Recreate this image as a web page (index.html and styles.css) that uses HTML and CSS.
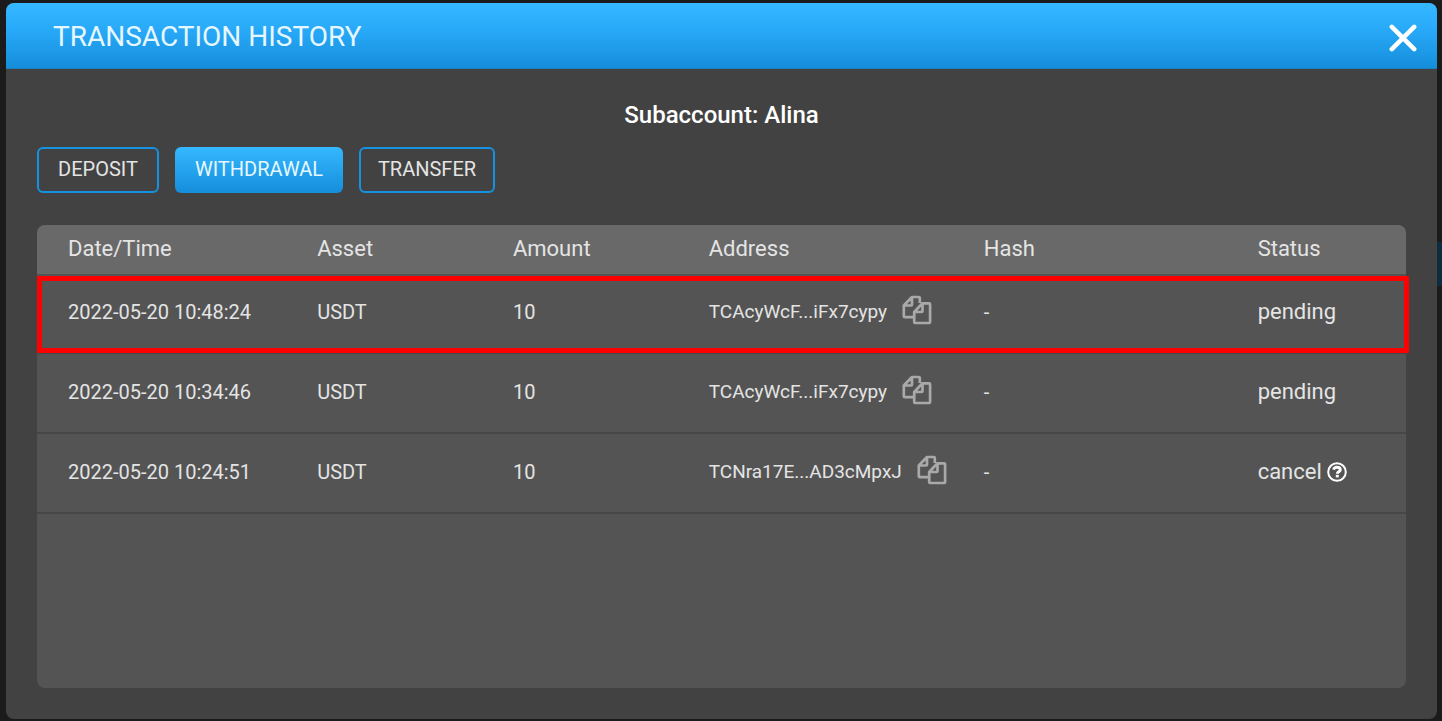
FILE: index.html
```html
<!DOCTYPE html>
<html lang="en">
<head>
<meta charset="utf-8">
<meta name="viewport" content="width=device-width, initial-scale=1">
<title>Transaction History</title>
<link rel="stylesheet" href="styles.css">
</head>
<body>
<svg class="sprite" aria-hidden="true">
  <symbol id="icon-copy" viewBox="0 0 30 30">
    <path d="M11.5 22.2H2.8Q1.8 22.2 1.8 21.2V10.5L10 2h6.8q1 0 1 1v5M2 10.5h7q1 0 1-1V2M12.2 17v10q0 1 1 1h13.9q1 0 1-1V9.3q0-1-1-1h-6.6L12.2 17h7.3q1 0 1-1V8.3" fill="none" stroke="currentColor" stroke-width="2.7" stroke-linejoin="round"/>
  </symbol>
</svg>
<div class="backdrop-tab"></div>
<main class="modal" role="dialog" aria-labelledby="modal-title">
  <header class="modal-header">
    <h1 class="modal-title" id="modal-title">TRANSACTION HISTORY</h1>
    <button class="close" type="button" aria-label="Close">
      <svg class="close-icon" viewBox="0 0 26 26"><path d="M2.6 2.6L23.4 23.4M23.4 2.6L2.6 23.4" stroke="currentColor" stroke-width="4.2" stroke-linecap="round"/></svg>
    </button>
  </header>
  <div class="modal-body">
    <h2 class="subaccount">Subaccount: Alina</h2>
    <nav class="tabs">
      <button class="tab tab-deposit" type="button">DEPOSIT</button>
      <button class="tab tab-withdrawal active" type="button">WITHDRAWAL</button>
      <button class="tab tab-transfer" type="button">TRANSFER</button>
    </nav>
    <section class="panel">
      <table class="history">
        <thead>
          <tr><th class="col-date">Date/Time</th><th class="col-asset">Asset</th><th class="col-amount">Amount</th><th class="col-address">Address</th><th class="col-hash">Hash</th><th class="col-status">Status</th></tr>
        </thead>
        <tbody>
          <tr class="highlight">
            <td>2022-05-20 10:48:24</td><td>USDT</td><td>10</td>
            <td><div class="address"><span>TCAcyWcF...iFx7cypy</span><button class="copy" type="button" aria-label="Copy address"><svg class="copy-icon"><use href="#icon-copy"/></svg></button></div></td>
            <td>-</td><td><div class="status">pending</div></td>
          </tr>
          <tr>
            <td>2022-05-20 10:34:46</td><td>USDT</td><td>10</td>
            <td><div class="address"><span>TCAcyWcF...iFx7cypy</span><button class="copy" type="button" aria-label="Copy address"><svg class="copy-icon"><use href="#icon-copy"/></svg></button></div></td>
            <td>-</td><td><div class="status">pending</div></td>
          </tr>
          <tr>
            <td>2022-05-20 10:24:51</td><td>USDT</td><td>10</td>
            <td><div class="address"><span>TCNra17E...AD3cMpxJ</span><button class="copy" type="button" aria-label="Copy address"><svg class="copy-icon"><use href="#icon-copy"/></svg></button></div></td>
            <td>-</td>
            <td><div class="status"><span>cancel</span><svg class="help-icon" viewBox="0 0 20 20" fill="none" stroke="currentColor"><circle cx="10" cy="10" r="8.8" stroke-width="2"/><path d="M6.6 7.6C7 5.8 8.4 5.2 10 5.2c2 0 3.3 1 3.3 2.5 0 2-3 2.1-3 4.1" stroke-width="2.9"/><path d="M8.8 14.1h3" stroke-width="2.6"/></svg></div></td>
          </tr>
        </tbody>
      </table>
    </section>
  </div>
</main>
</body>
</html>
```
FILE: styles.css
```css
* { box-sizing: border-box; }
body {
  margin: 0;
  min-height: 100vh;
  padding: 3px 5px 2px 6px;
  display: flex;
  background: #1b1b1b;
  color: #e4e4e4;
  font-family: Roboto, "Liberation Sans", sans-serif;
  font-size: 20px;
  line-height: 24px;
}
button { font: inherit; color: inherit; background: none; border: 0; padding: 0; cursor: pointer; }
.sprite { position: absolute; width: 0; height: 0; }
.backdrop-tab {
  position: absolute;
  right: 0;
  top: 242px;
  width: 10px;
  height: 44px;
  background: #0f2c3f;
}
.modal {
  position: relative;
  flex: 1;
  display: flex;
  flex-direction: column;
  background: #424242;
  border-radius: 8px;
  overflow: hidden;
}
.modal-header {
  height: 66px;
  padding: 2px 20px 0 47px;
  display: flex;
  align-items: center;
  justify-content: space-between;
  background: linear-gradient(#35b8ff, #2aacfb 35%, #158edb);
  border-bottom: 1px solid #1c7fbd;
}
.modal-title { margin: 0; color: #e6f7ff; font-size: 28px; line-height: 36px; font-weight: 400; }
.close { display: flex; padding: 2px 0 0; color: #fff; }
.close-icon { width: 28px; height: 28px; }
.modal-body { flex: 1; display: flex; flex-direction: column; padding: 32px 31px 31px; }
.subaccount { margin: 0; text-align: center; color: #fff; font-size: 24px; line-height: 28px; font-weight: 500; }
.tabs { display: flex; gap: 16px; margin: 18px 0 32px; }
.tab {
  height: 46px;
  padding-bottom: 2px;
  border: 2px solid #1593e2;
  border-radius: 6px;
}
.tab-deposit { width: 122px; }
.tab-withdrawal { width: 168px; }
.tab-transfer { width: 136px; }
.tab.active { background: linear-gradient(#35b8ff, #158edb) border-box; border-color: transparent; color: #e6f7ff; }
.panel { flex: 1; background: #545454; border-radius: 8px; }
.history { width: 100%; table-layout: fixed; border-collapse: separate; border-spacing: 0; }
.history th { height: 49px; padding: 0 0 2px 31px; text-align: left; font-size: 22px; font-weight: 400; background: #696969; }
.history th:first-child { border-top-left-radius: 8px; }
.history th:last-child { border-top-right-radius: 8px; }
.history td { height: 80px; padding: 0 0 2px 31px; border-bottom: 2px solid #464646; white-space: nowrap; }
.col-date { width: 18.2%; }
.col-asset { width: 14.3%; }
.col-amount { width: 14.3%; }
.col-address { width: 20.1%; }
.col-hash { width: 20%; }
.col-status { width: 13.1%; }
.highlight { position: relative; }
.highlight::after {
  content: "";
  position: absolute;
  inset: 2px -3px 1px 0;
  border: 5px solid #f00;
}
.address { display: flex; align-items: center; gap: 15px; font-size: 19px; }
.copy { display: flex; padding-bottom: 4px; color: #a9a9a9; }
.copy-icon { width: 30px; height: 30px; }
.status { display: flex; align-items: center; gap: 5px; font-size: 22px; }
.help-icon { flex: none; width: 20px; height: 20px; color: #fff; }
```
